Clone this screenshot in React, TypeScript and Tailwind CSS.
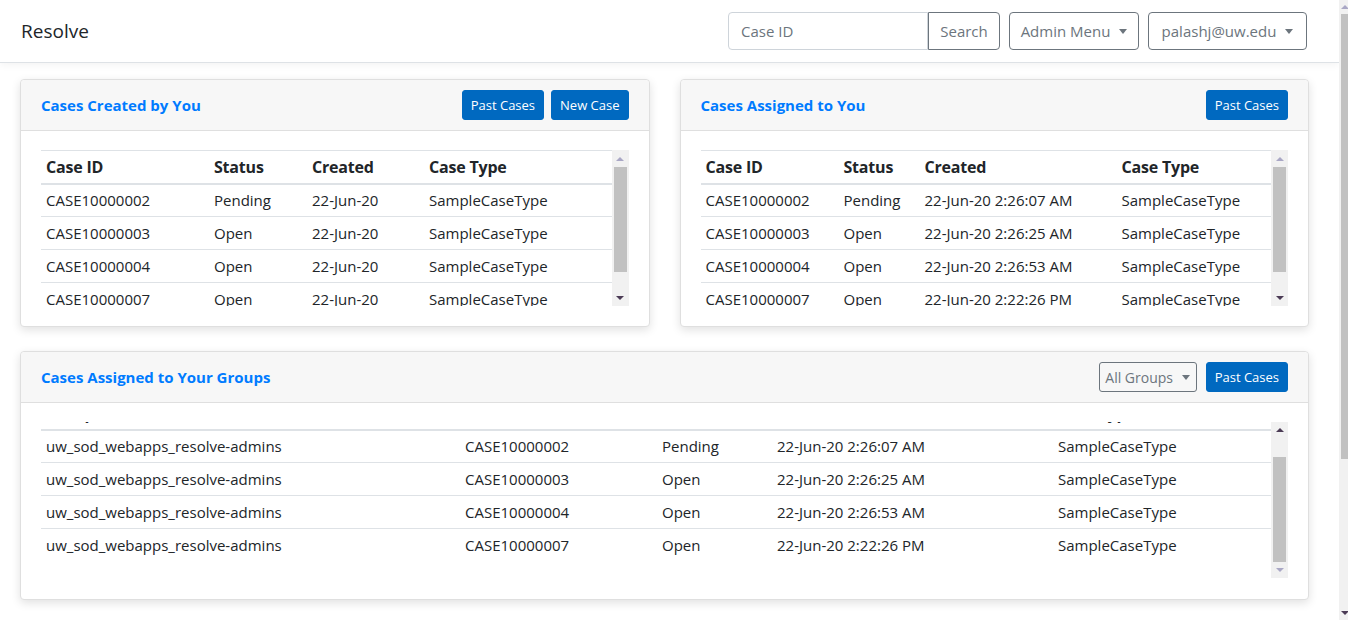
import React from "react";

type Row = string[];

const createdRows: Row[] = [
  ["CASE10000002", "Pending", "22-Jun-20", "SampleCaseType"],
  ["CASE10000003", "Open", "22-Jun-20", "SampleCaseType"],
  ["CASE10000004", "Open", "22-Jun-20", "SampleCaseType"],
  ["CASE10000007", "Open", "22-Jun-20", "SampleCaseType"],
];

const assignedRows: Row[] = [
  ["CASE10000002", "Pending", "22-Jun-20 2:26:07 AM", "SampleCaseType"],
  ["CASE10000003", "Open", "22-Jun-20 2:26:25 AM", "SampleCaseType"],
  ["CASE10000004", "Open", "22-Jun-20 2:26:53 AM", "SampleCaseType"],
  ["CASE10000007", "Open", "22-Jun-20 2:22:26 PM", "SampleCaseType"],
];

const groupRows: Row[] = [
  ["uw_sod_webapps_resolve-admins", "CASE10000002", "Pending", "22-Jun-20 2:26:07 AM", "SampleCaseType"],
  ["uw_sod_webapps_resolve-admins", "CASE10000003", "Open", "22-Jun-20 2:26:25 AM", "SampleCaseType"],
  ["uw_sod_webapps_resolve-admins", "CASE10000004", "Open", "22-Jun-20 2:26:53 AM", "SampleCaseType"],
  ["uw_sod_webapps_resolve-admins", "CASE10000007", "Open", "22-Jun-20 2:22:26 PM", "SampleCaseType"],
];

function Caret({ color = "border-t-[#6c757d]" }: { color?: string }) {
  return (
    <span
      className={`inline-block w-0 h-0 border-l-[4px] border-r-[4px] border-t-[5px] border-l-transparent border-r-transparent ${color} ml-[9px]`}
    />
  );
}

function Arrow({ up, dark }: { up: boolean; dark: boolean }) {
  const c = dark
    ? up
      ? "border-b-[#4b3b55]"
      : "border-t-[#4b3b55]"
    : up
      ? "border-b-[#a9a7c5]"
      : "border-t-[#a9a7c5]";
  return (
    <div className="h-[17px] flex items-center justify-center">
      <span
        className={`w-0 h-0 border-l-[4px] border-r-[4px] border-l-transparent border-r-transparent ${
          up ? "border-b-[4px]" : "border-t-[4px]"
        } ${c}`}
      />
    </div>
  );
}

// fake classic scrollbar for the table boxes
function TableScroll({ atBottom }: { atBottom: boolean }) {
  return (
    <div className="w-[17px] shrink-0 bg-[#f1f1f1] flex flex-col">
      <Arrow up dark={atBottom} />
      <div className="flex-1 flex flex-col">
        {atBottom && <div className="h-[18px]" />}
        <div className="h-[105px] mx-[2px] bg-[#c1c1c1]" />
      </div>
      <Arrow up={false} dark={!atBottom} />
    </div>
  );
}

function BlueBtn({ children }: { children: React.ReactNode }) {
  return (
    <button className="h-[30px] px-[8px] rounded-[3px] bg-[#0069c0] border border-[#0069c0] text-white text-[13px] leading-none">
      {children}
    </button>
  );
}

function DataTable({
  cols,
  widths,
  rows,
  scrolled,
}: {
  cols: string[];
  widths: string[];
  rows: Row[];
  scrolled?: boolean;
}) {
  return (
    <div className="flex h-[156px]">
      <div className="flex-1 overflow-hidden">
        <table className={`w-full border-collapse table-fixed ${scrolled ? "mt-[-26px]" : ""}`}>
          <colgroup>
            {widths.map((w, i) => (
              <col key={i} className={w} />
            ))}
          </colgroup>
          <thead>
            <tr className="border-t border-[#dee2e6]">
              {cols.map((c) => (
                <th
                  key={c}
                  className="h-[33px] px-[5px] text-left font-bold text-[16px] tracking-[-0.2px] text-[#212529] border-b-2 border-[#dee2e6]"
                >
                  {c}
                </th>
              ))}
            </tr>
          </thead>
          <tbody>
            {rows.map((r, i) => (
              <tr key={i} className="border-t border-[#dee2e6]">
                {r.map((v, j) => (
                  <td
                    key={j}
                    className="h-[33px] px-[5px] text-[15px] text-[#212529] whitespace-nowrap"
                  >
                    {v}
                  </td>
                ))}
              </tr>
            ))}
          </tbody>
        </table>
      </div>
      <TableScroll atBottom={!!scrolled} />
    </div>
  );
}

function Card({
  title,
  actions,
  children,
  h,
}: {
  title: string;
  actions: React.ReactNode;
  children: React.ReactNode;
  h: string;
}) {
  return (
    <div
      className={`bg-white border border-[#dfdfdf] rounded-[4px] shadow-[0_3px_10px_rgba(0,0,0,0.12)] flex flex-col ${h}`}
    >
      <div className="h-[51px] shrink-0 bg-[#f7f7f7] border-b border-[#dfdfdf] rounded-t-[4px] flex items-center justify-between pl-[20px] pr-[20px]">
        <span className="text-[#007bff] font-bold text-[15px]">{title}</span>
        <div className="flex items-center gap-[7px]">{actions}</div>
      </div>
      <div className="px-[20px] pt-[19px]">{children}</div>
    </div>
  );
}

export default function App() {
  return (
    <div
      className="w-[1348px] h-[620px] overflow-hidden flex bg-white text-[#212529]"
      style={{ fontFamily: '"Open Sans", "Noto Sans", sans-serif' }}
    >
      <div className="w-[1339px] shrink-0 flex flex-col">
        {/* top nav */}
        <div className="h-[63px] shrink-0 border-b border-[#dee2e6] shadow-[0_2px_8px_rgba(0,0,0,0.05)] flex items-center justify-between pl-[21px] pr-[32px]">
          <span className="text-[19px] text-[#212529]">Resolve</span>
          <div className="flex items-center gap-[9px]">
            <div className="flex h-[38px]">
              <div className="w-[200px] border border-[#ced4da] rounded-l-[4px] flex items-center pl-[12px] text-[15px] text-[#6c757d]">
                Case ID
              </div>
              <button className="w-[72px] border border-[#6c757d] rounded-r-[4px] text-[15px] text-[#6c757d]">
                Search
              </button>
            </div>
            <button className="h-[38px] w-[130px] border border-[#6c757d] rounded-[4px] text-[15px] text-[#6c757d] flex items-center justify-center">
              Admin Menu
              <Caret />
            </button>
            <button className="h-[38px] w-[159px] border border-[#6c757d] rounded-[4px] text-[15px] text-[#6c757d] flex items-center justify-center">
              palashj@uw.edu
              <Caret />
            </button>
          </div>
        </div>

        {/* dashboard */}
        <div className="pl-[20px] pr-[30px] pt-[16px] flex flex-col gap-[24px]">
          <div className="grid grid-cols-2 gap-[30px]">
            <Card
              h="h-[248px]"
              title="Cases Created by You"
              actions={
                <>
                  <BlueBtn>Past Cases</BlueBtn>
                  <BlueBtn>New Case</BlueBtn>
                </>
              }
            >
              <DataTable
                cols={["Case ID", "Status", "Created", "Case Type"]}
                widths={["w-[168px]", "w-[98px]", "w-[117px]", "w-auto"]}
                rows={createdRows}
              />
            </Card>
            <Card h="h-[248px]" title="Cases Assigned to You" actions={<BlueBtn>Past Cases</BlueBtn>}>
              <DataTable
                cols={["Case ID", "Status", "Created", "Case Type"]}
                widths={["w-[138px]", "w-[81px]", "w-[197px]", "w-auto"]}
                rows={assignedRows}
              />
            </Card>
          </div>

          <Card
            h="h-[249px]"
            title="Cases Assigned to Your Groups"
            actions={
              <>
                <button className="h-[30px] w-[98px] mr-[2px] border border-[#6c757d] rounded-[3px] text-[14px] text-[#6c757d] flex items-center justify-center">
                  All Groups
                  <Caret />
                </button>
                <BlueBtn>Past Cases</BlueBtn>
              </>
            }
          >
            <DataTable
              cols={["Group", "Case ID", "Status", "Created", "Case Type"]}
              widths={["w-[419px]", "w-[197px]", "w-[115px]", "w-[281px]", "w-auto"]}
              rows={groupRows}
              scrolled
            />
          </Card>
        </div>
      </div>

      {/* page scrollbar */}
      <div className="w-[9px] shrink-0 bg-[#f1f1f1] flex flex-col">
        <div className="h-[14px] flex items-center pl-[2px]">
          <span className="w-0 h-0 border-l-[4px] border-r-[4px] border-b-[4px] border-l-transparent border-r-transparent border-b-[#a9a7c5]" />
        </div>
        <div className="h-[445px] ml-[2px] bg-[#c1c1c1]" />
        <div className="flex-1" />
        <div className="h-[14px] flex items-center pl-[2px]">
          <span className="w-0 h-0 border-l-[4px] border-r-[4px] border-t-[4px] border-l-transparent border-r-transparent border-t-[#4b3b55]" />
        </div>
      </div>
    </div>
  );
}
